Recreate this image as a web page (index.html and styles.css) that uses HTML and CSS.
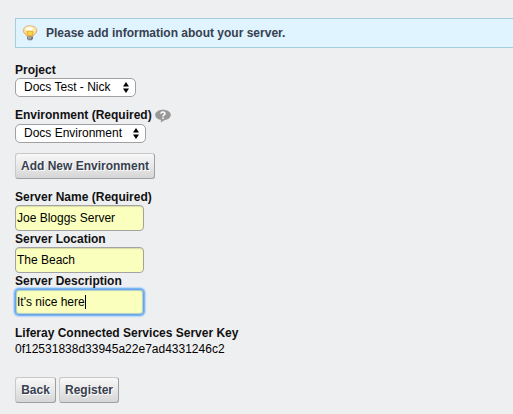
FILE: index.html
```html
<!DOCTYPE html>
<html lang="en">
<head>
<meta charset="utf-8">
<title>Register Server</title>
<link rel="stylesheet" href="styles.css">
</head>
<body>
<div class="notice">
  <svg class="bulb" width="16" height="16" viewBox="0 0 16 16">
    <defs><radialGradient id="glow" cx="50%" cy="40%" r="60%"><stop offset="0" stop-color="#fffbd5"/><stop offset=".55" stop-color="#fdeea5"/><stop offset="1" stop-color="#efb869"/></radialGradient></defs>
    <path d="M8 .7C3.800.7 1.200 3 1.200 5.700c0 2.900 3.200 3.700 3.900 5.800h5.800c.7-2.100 3.900-2.900 3.900-5.800C14.800 3 12.200.7 8 .7z" fill="url(#glow)" stroke="#dfa873" stroke-width=".8"/>
    <path d="M4.800 6.300h6.400l-1 4.400H5.800z" fill="#fbd544" stroke="#dfa23a" stroke-width=".8"/>
    <ellipse cx="7" cy="3.500" rx="3.600" ry="1.600" fill="#fff" opacity=".8"/>
    <path d="M5 11.500h6v2L9.800 15.200H6.200L5 13.500z" fill="#74777c"/>
    <path d="M5.500 12.300h4M6 13.800h3" stroke="#c6c9cc" stroke-width=".7"/>
  </svg>
  <span>Please add information about your server.</span>
</div>
<form class="form">
  <div class="label">Project</div>
  <div class="select project"><span>Docs Test - Nick</span>
    <svg width="6" height="11" viewBox="0 0 6 11"><path d="M3 0l3 4.500H0zM0 6.500h6L3 11z"/></svg></div>
  <div class="label environment-label"><span>Environment (Required)</span>
    <svg class="help" width="16" height="14" viewBox="0 0 16 14"><path d="M8 .8c4.400 0 7.800 2.200 7.800 5.100 0 2.600-2.500 4.500-5.900 5L5.600 13.500l.5-2.700C2.700 10.300.2 8.400.2 5.900.2 3 3.600.8 8 .8z" fill="#989898"/><path d="M6 4.700c.1-2.300 4-2.300 4 0C10 6 8 6 8 7.500" fill="none" stroke="#fff" stroke-width="1.500"/><path d="M7.200 8.500h1.600V10H7.200z" fill="#fff"/></svg></div>
  <div class="select environment"><span>Docs Environment</span>
    <svg width="6" height="11" viewBox="0 0 6 11"><path d="M3 0l3 4.500H0zM0 6.500h6L3 11z"/></svg></div>
  <button type="button" class="button add">Add New Environment</button>
  <div class="label">Server Name (Required)</div>
  <div class="input">Joe Bloggs Server</div>
  <div class="label">Server Location</div>
  <div class="input">The Beach</div>
  <div class="label">Server Description</div>
  <div class="input focused">It's nice here<i class="caret"></i></div>
  <div class="label key-label">Liferay Connected Services Server Key</div>
  <div class="key">0f12531838d33945a22e7ad4331246c2</div>
  <div class="actions">
    <button type="button" class="button back">Back</button>
    <button type="button" class="button register">Register</button>
  </div>
</form>
</body>
</html>
```
FILE: styles.css
```css
* { box-sizing: border-box; }
body {
  margin: 0;
  padding: 18px 0 0 15px;
  background: #eeeff1;
  color: #000;
  font: 12px/16px "Liberation Sans", Arial, sans-serif;
  overflow: hidden;
}
.notice {
  display: flex;
  align-items: center;
  height: 30px;
  padding-left: 6px;
  border: 1px solid #a3cee1;
  border-right: 0;
  background: #dff4ff;
  color: #384050;
  font-weight: bold;
}
.bulb { margin-right: 8px; }
.form { padding-top: 14px; }
.label {
  height: 16px;
  color: #111;
  font-weight: bold;
  white-space: nowrap;
}
.environment-label { display: flex; margin-top: 11px; line-height: 15px; }
.help { margin: 1px 0 0 3px; }
.select {
  display: flex;
  align-items: center;
  justify-content: space-between;
  height: 19px;
  padding: 0 6px 1px 8px;
  border: 1px solid #a0a0a3;
  border-radius: 5px;
  background: #fff;
  white-space: nowrap;
}
.project { width: 121px; }
.environment { width: 131px; }
.button {
  display: block;
  height: 26px;
  padding: 0;
  border: 1px solid;
  border-color: #c8c9ca #9e9e9e #9e9e9e #c8c9ca;
  border-radius: 3px;
  background: linear-gradient(#f8f8f8, #d6d6d6);
  color: #384050;
  font: bold 12px/24px "Liberation Sans", Arial, sans-serif;
  text-shadow: 1px 1px #fff;
  white-space: nowrap;
}
.add { width: 140px; margin: 10px 0; }
.input {
  width: 129px;
  height: 26px;
  padding-left: 1px;
  border: 1px solid #a2a3a2;
  border-radius: 4px;
  background: #faffbd;
  box-shadow: inset 0 1px 1px #d9dda9;
  line-height: 24px;
  white-space: nowrap;
}
.focused {
  border-color: #67a5e4;
  box-shadow: 0 0 0 1px #7db6f8, 0 0 1px 2px #b9d7f7, inset 0 0 1px 1px #b3cfc5;
}
.caret {
  display: inline-block;
  width: 1px;
  height: 14px;
  background: #000;
  vertical-align: -3px;
}
.key-label { margin-top: 10px; }
.key { height: 16px; line-height: 16px; }
.actions { display: flex; gap: 3px; margin-top: 20px; }
.back { width: 41px; }
.register { width: 60px; }
```
